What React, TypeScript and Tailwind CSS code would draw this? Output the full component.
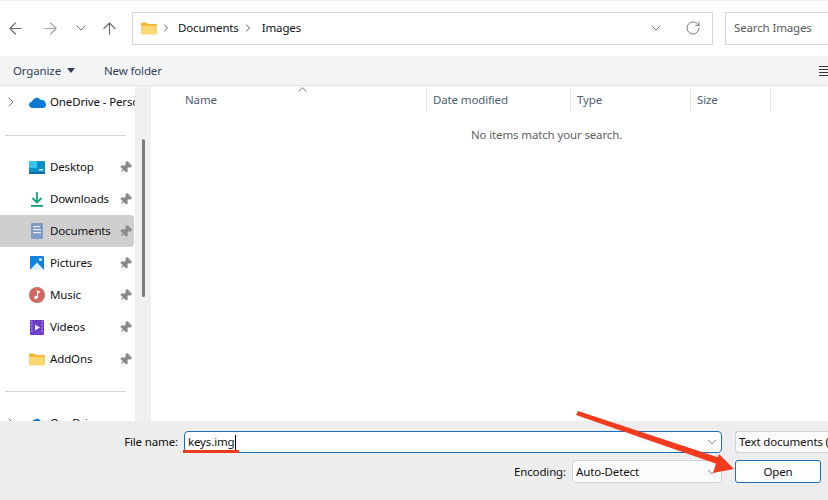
import React from "react";
import { ArrowLeft, ArrowRight, ArrowUp, ChevronDown, ChevronRight, RotateCw, Pin } from "lucide-react";

const FolderIcon = ({ w = 20, h = 16 }: { w?: number; h?: number }) => (
  <svg width={w} height={h} viewBox="0 0 20 16">
    <path d="M0 2a1.5 1.5 0 0 1 1.5-1.5h5L9 2.500h9.500A1.500 1.500 0 0 1 20 4v2H0z" fill="#f2b632" />
    <path d="M0 4.500h20V14a1.500 1.500 0 0 1-1.500 1.500h-17A1.500 1.500 0 0 1 0 14z" fill="#fbd774" />
  </svg>
);

const OneDrive = () => (
  <svg width="17" height="11" viewBox="0 0 17 11" className="block shrink-0">
    <path d="M3.600 11C1.600 11 0 9.600 0 7.800c0-1.600 1.200-2.900 2.900-3.200C3.500 2.600 5.200 1.200 7.200.9c1.700-.2 3.200.5 4 1.800C14.200 2.500 16.800 4.600 17 7.500 17 9.500 15.700 11 13.800 11z" fill="#0f78d4" />
  </svg>
);

const icons: Record<string, React.ReactNode> = {
  Desktop: (
    <svg width="16" height="13" viewBox="0 0 16 13">
      <rect width="16" height="12" rx="1" fill="#0f8fc9" />
      <rect x="0" y="0" width="8" height="7" fill="#35c5ee" />
      <rect x="10" y="8" width="4" height="1.500" fill="#c9eefa" />
      <rect y="11" width="16" height="2" fill="#0b6ea8" />
    </svg>
  ),
  Downloads: (
    <svg width="14" height="15" viewBox="0 0 14 15">
      <path d="M7 0v10M2.500 6 7 10.500 11.500 6" stroke="#14a37f" strokeWidth="1.800" fill="none" />
      <rect x="1" y="13" width="12" height="1.800" fill="#14a37f" />
    </svg>
  ),
  Documents: (
    <svg width="12" height="16" viewBox="0 0 12 16">
      <rect width="12" height="16" rx="1" fill="#7f9cc4" />
      <rect x="2" y="3" width="7" height="1.200" fill="#e5ecf5" />
      <rect x="2" y="6" width="8" height="1.200" fill="#e5ecf5" />
      <rect x="2" y="9" width="8" height="1.200" fill="#e5ecf5" />
    </svg>
  ),
  Pictures: (
    <svg width="14" height="14" viewBox="0 0 14 14">
      <rect width="14" height="14" rx="1" fill="#1483e0" />
      <path d="M0 14 7 6.500 14 14z" fill="#dff0fd" />
      <circle cx="10.500" cy="3.500" r="1.500" fill="#dff0fd" />
    </svg>
  ),
  Music: (
    <svg width="16" height="16" viewBox="0 0 16 16">
      <circle cx="8" cy="8" r="8" fill="#cf6a63" />
      <path d="M8.500 3.500v7" stroke="#fff" strokeWidth="1.200" />
      <circle cx="7" cy="10.500" r="1.700" fill="#fff" />
      <path d="M8.500 3.500 11 4.500v1.500L8.500 5z" fill="#fff" />
    </svg>
  ),
  Videos: (
    <svg width="14" height="15" viewBox="0 0 14 15">
      <rect width="14" height="15" rx="1" fill="#6b3fc9" />
      <path d="M5 4.500v6l5-3z" fill="#f2eaff" />
      <path d="M1 2h1.500M1 5h1.500M1 8h1.500M1 11h1.500M11.500 2H13M11.500 5H13M11.500 8H13M11.500 11H13" stroke="#c9b4f2" strokeWidth="1" />
    </svg>
  ),
  AddOns: <FolderIcon w={16} h={13} />,
};

const places = ["Desktop", "Downloads", "Documents", "Pictures", "Music", "Videos", "AddOns"];

const Row = ({ name }: { name: string }) => (
  <div className={`flex h-8 w-[134px] shrink-0 items-center rounded-r-sm ${name === "Documents" ? "bg-[#cfcfcf]" : ""}`}>
    <span className="flex w-[50px] shrink-0 justify-center pl-[29px] pr-[5px]">
      <span className="flex w-4 justify-center">{icons[name]}</span>
    </span>
    <span className="flex-1">{name}</span>
    <Pin size={13} className="mr-[2px] rotate-45 fill-[#8b8b8b] text-[#8b8b8b]" />
  </div>
);

const Col = ({ label, w }: { label: string; w: string }) => (
  <div className={`flex h-6 items-center border-r border-[#e3e5e8] pl-[6px] ${w}`}>{label}</div>
);

export default function App() {
  return (
    <div className="relative flex h-[500px] w-[828px] flex-col overflow-hidden bg-white text-[11.5px] tracking-[-0.14px] text-[#111] [font-family:'Noto_Sans',sans-serif]">
      <div className="flex h-14 shrink-0 items-center border-t border-[#f0f0f0] pb-[1px]">
        <div className="flex w-[132px] shrink-0 items-center text-[#6e6e6e]">
          <ArrowLeft size={19} className="ml-[6px] shrink-0" strokeWidth={1.5} />
          <ArrowRight size={19} className="ml-[16px] shrink-0 text-[#a5a5a5]" strokeWidth={1.5} />
          <ChevronDown size={16} className="ml-[13px] shrink-0" strokeWidth={1.5} />
          <ArrowUp size={19} className="ml-[11px] shrink-0" strokeWidth={1.5} />
        </div>
        <div className="flex h-[33px] w-[581px] shrink-0 items-center border border-[#d6d6d6]">
          <span className="ml-2"><FolderIcon w={16} h={13} /></span>
          <ChevronRight size={12} className="ml-[3px] text-[#5c5c5c]" />
          <span className="ml-[6px]">Documents</span>
          <ChevronRight size={12} className="ml-[3px] text-[#5c5c5c]" />
          <span className="ml-[8px]">Images</span>
          <ChevronDown size={16} className="ml-auto text-[#7a7a7a]" strokeWidth={1.5} />
          <RotateCw size={16} className="ml-[21px] mr-[11px] text-[#7a7a7a]" strokeWidth={1.5} />
        </div>
        <div className="ml-3 flex h-[33px] flex-1 items-center border border-r-0 border-[#d6d6d6] pl-2 text-[#5a5a5a]">Search Images</div>
      </div>

      <div className="flex h-[30px] shrink-0 items-center border-b border-[#e6e6e6] bg-[#f3f4f6] text-[#2f4258]">
        <span className="ml-[13px]">Organize</span>
        <svg width="8" height="5" viewBox="0 0 8 5" className="ml-[6px]"><path d="M0 0h8L4 5z" fill="#2f4258" /></svg>
        <span className="ml-[29px]">New folder</span>
        <span className="ml-auto flex flex-col gap-[2px]">
          <span className="h-[1px] w-[9px] bg-[#333]" />
          <span className="h-[1px] w-[9px] bg-[#333]" />
          <span className="h-[1px] w-[9px] bg-[#333]" />
          <span className="h-[1px] w-[9px] bg-[#333]" />
        </span>
      </div>

      <div className="flex min-h-0 flex-1">
        <div className="flex w-[135px] shrink-0 flex-col overflow-hidden">
          <div className="flex h-8 shrink-0 items-center whitespace-nowrap">
            <ChevronRight size={16} className="ml-[3px] shrink-0 text-[#7a7a7a]" strokeWidth={1.5} />
            <span className="ml-[10px] shrink-0"><OneDrive /></span>
            <span className="ml-[4px]">OneDrive - Personal</span>
          </div>
          <div className="mx-[5px] mt-[17px] mb-[15px] h-[1px] w-[121px] shrink-0 bg-[#d4d4d4]" />
          {places.map((p) => <Row key={p} name={p} />)}
          <div className="mx-[5px] mt-4 mb-[15px] h-[1px] w-[121px] shrink-0 bg-[#d4d4d4]" />
          <div className="flex h-8 shrink-0 items-center whitespace-nowrap">
            <ChevronRight size={16} className="ml-[3px] shrink-0 text-[#7a7a7a]" strokeWidth={1.5} />
            <span className="ml-[10px] shrink-0"><OneDrive /></span>
            <span className="ml-[4px]">OneDrive</span>
          </div>
        </div>

        <div className="w-4 shrink-0 bg-[#f0f0f0] pl-[7px] pt-[53px]">
          <div className="h-[158px] w-[3px] rounded-full bg-[#7d7d7d]" />
        </div>

        <div className="flex min-w-0 flex-1 flex-col">
          <div className="relative mt-[2px] flex h-6 shrink-0 items-center text-[#4f6074]">
            <Col label="" w="w-[276px]" />
            <span className="absolute left-[34px] top-[3px]">Name</span>
            <svg width="9" height="5" viewBox="0 0 9 5" className="absolute left-[147px] top-[-1px]"><path d="M.5 4.500 4.500.8l4 3.700" stroke="#6f7b88" fill="none" /></svg>
            <Col label="Date modified" w="w-[144px]" />
            <Col label="Type" w="w-[120px]" />
            <Col label="Size" w="w-[80px]" />
          </div>
          <div className="mt-[14px] w-[792px] pl-[320px] text-[#5f5f5f]">No items match your search.</div>
        </div>
      </div>

      <div className="flex h-[79px] shrink-0 flex-col bg-[#ededed] pt-[10px]">
        <div className="flex h-[22px] items-center">
          <span className="w-[178px] text-right">File name:</span>
          <div className="ml-[6px] flex h-[22px] w-[538px] shrink-0 items-center rounded-sm border border-[#1a6fb8] bg-white pl-[3px] pr-[2px]">
            <span>keys.img</span>
            <span className="h-[15px] w-[1px] bg-black" />
            <ChevronDown size={14} className="ml-auto text-[#666]" strokeWidth={1.5} />
          </div>
          <div className="ml-[13px] flex h-[22px] flex-1 items-center overflow-hidden whitespace-nowrap rounded-l-sm border border-r-0 border-[#d2d2d2] bg-[#fbfbfb] pl-[3px]">Text documents (*.txt)</div>
        </div>
        <div className="mt-[7px] flex h-[23px] items-center">
          <span className="w-[566px] text-right">Encoding:</span>
          <div className="ml-[6px] flex h-[23px] w-[150px] shrink-0 items-center rounded-sm border border-[#d2d2d2] bg-[#fbfbfb] pl-[3px] pr-[2px]">
            <span>Auto-Detect</span>
            <ChevronDown size={14} className="ml-auto text-[#666]" strokeWidth={1.5} />
          </div>
          <button className="ml-[13px] h-[23px] w-[86px] rounded-[3px] border border-[#1a6fb8] bg-[#fdfdfd]">Open</button>
        </div>
      </div>

      <div className="absolute left-[183px] top-[450px] h-[3px] w-[56px] bg-[#ee3a1c]" />
      <svg className="absolute left-0 top-0" width="828" height="500" viewBox="0 0 828 500">
        <path d="M576 415 578 411 720 458 717 464z" fill="#f23b1e" />
        <path d="M734 469 713 473 719 454z" fill="#f23b1e" />
      </svg>
    </div>
  );
}
